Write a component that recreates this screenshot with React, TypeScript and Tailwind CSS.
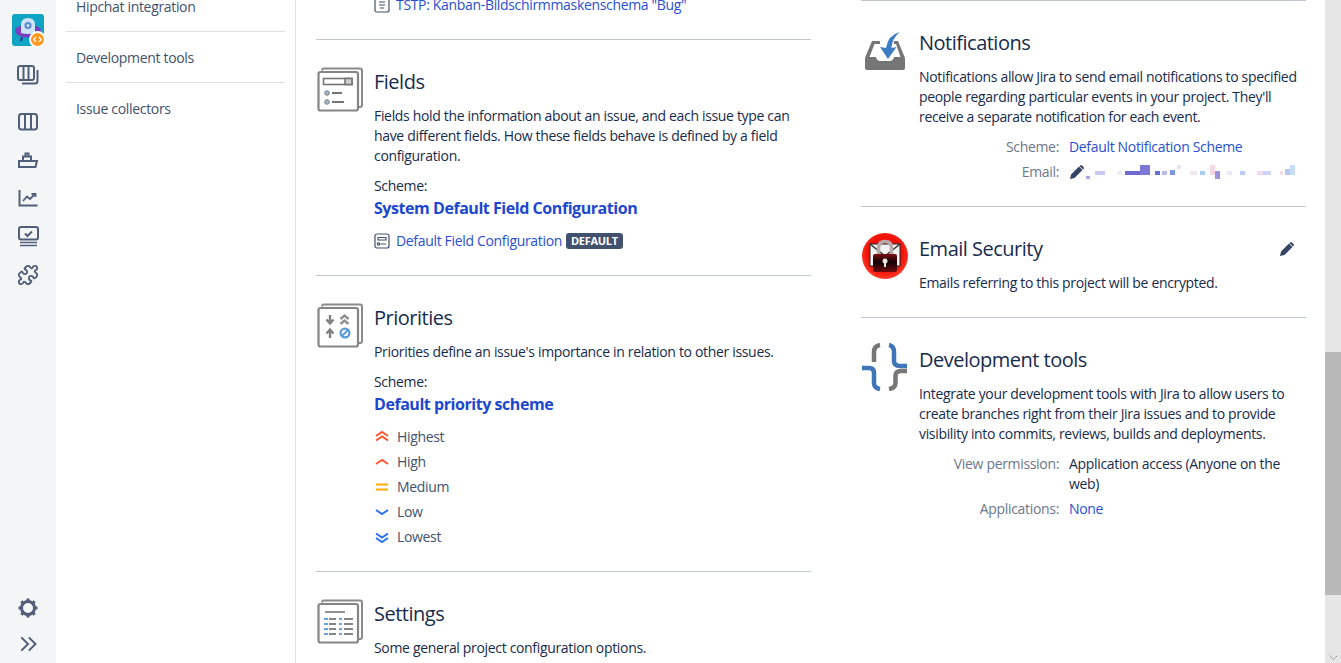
import React from 'react';
import { Puzzle } from 'lucide-react';

const font = { fontFamily: '"Open Sans", "Noto Sans", sans-serif' };

function Stack({ children }: { children: React.ReactNode }) {
  return (
    <svg width="46" height="46" viewBox="0 0 46 46" fill="none">
      <path d="M5 3.5 Q5 1.5 7 1.5 H43 Q45 1.5 45 3.5 V38 Q45 40 43 40 H41" stroke="#8a8a8a" strokeWidth="2" />
      <rect x="1.5" y="5" width="39.5" height="38.5" rx="2" fill="#fff" stroke="#858585" strokeWidth="2.2" />
      {children}
    </svg>
  );
}

function FieldsIcon() {
  return (
    <Stack>
      <rect x="6.5" y="11.5" width="28.5" height="6" fill="#fff" stroke="#757575" strokeWidth="1.6" />
      <rect x="28" y="11.5" width="7" height="6" fill="#cfcfcf" stroke="#757575" strokeWidth="1.6" />
      <circle cx="10" cy="26" r="2.3" fill="#9db8d3" stroke="#808080" />
      <circle cx="10" cy="35" r="2.3" fill="#9db8d3" stroke="#808080" />
      <path d="M15 26 H25 M15 35 H27" stroke="#757575" strokeWidth="2" />
    </Stack>
  );
}

function PrioritiesIcon() {
  return (
    <Stack>
      <path d="M13 12 V20 M9.5 16.5 L13 20.5 L16.5 16.5" stroke="#808080" strokeWidth="2.4" />
      <path d="M23.5 16 L27.5 12.5 L31.5 16 M23.5 21 L27.5 17.5 L31.5 21" stroke="#8f8f8f" strokeWidth="2.4" />
      <path d="M13 35 V27 M9.5 30.5 L13 26.5 L16.5 30.5" stroke="#808080" strokeWidth="2.4" />
      <circle cx="28" cy="30" r="4.4" stroke="#5b9bd5" strokeWidth="2.2" />
      <path d="M25 33 L31 27" stroke="#5b9bd5" strokeWidth="2" />
    </Stack>
  );
}

function SettingsIcon() {
  return (
    <Stack>
      <path d="M8 13 H28" stroke="#858585" strokeWidth="1.8" />
      <path d="M7 20 H11 M7 25 H11 M7 30 H11 M7 35 H11 M22 20 H25 M22 25 H25 M22 30 H25 M22 35 H25" stroke="#6ba3dc" strokeWidth="1.8" />
      <path d="M12 20 H19 M12 25 H19 M12 30 H19 M12 35 H19 M27 20 H36 M27 25 H36 M27 30 H36 M27 35 H36" stroke="#858585" strokeWidth="1.8" />
    </Stack>
  );
}

function NotificationsIcon() {
  return (
    <svg width="46" height="46" viewBox="0 0 46 46">
      <path d="M10 13 H18 V16 H12.5 L7.5 29 H14 Q15 33 18 33 H28 Q31 33 32 29 H38.5 L34 16 H32 V13 H36 L43 30 V40 Q43 42 41 42 H5 Q3 42 3 40 V30 Z" fill="#757575" />
      <path d="M38 4 Q26 7 24 20 L18 19 L26 31 L34.5 19 L29.5 20 Q30 10 38 4 Z" fill="#3d7dc4" />
    </svg>
  );
}

function EmailSecurityIcon() {
  return (
    <svg width="46" height="46" viewBox="0 0 46 46" className="-mt-px">
      <defs>
        <radialGradient id="redball" cx="50%" cy="45%" r="55%">
          <stop offset="0%" stopColor="#e80c04" />
          <stop offset="70%" stopColor="#f01208" />
          <stop offset="100%" stopColor="#ff3a28" />
        </radialGradient>
        <linearGradient id="lockbody" x1="0" y1="0" x2="0" y2="1">
          <stop offset="0%" stopColor="#7a0d10" />
          <stop offset="45%" stopColor="#120104" />
          <stop offset="100%" stopColor="#6e0c0e" />
        </linearGradient>
      </defs>
      <circle cx="23" cy="23" r="23" fill="url(#redball)" />
      <rect x="8" y="11" width="30" height="22" fill="#f2f2f2" stroke="#222" />
      <path d="M8 11 L23 23 L38 11" fill="none" stroke="#333" strokeWidth="1.5" />
      <path d="M16.5 23 V15 Q16.5 8.5 23 8.5 Q29.5 8.5 29.5 15 V23" fill="none" stroke="#b9a9a9" strokeWidth="3.5" />
      <rect x="11" y="21" width="24" height="18" rx="2" fill="url(#lockbody)" />
      <circle cx="23" cy="28" r="2.5" fill="#e6e6e6" />
      <rect x="22" y="28" width="2" height="6" fill="#e6e6e6" />
    </svg>
  );
}

function DevToolsIcon() {
  return (
    <svg width="46" height="48" viewBox="0 0 46 48" fill="none" strokeWidth="4.5" className="-mt-[2px]">
      <path d="M18 2 Q12 3 12 9 V19" stroke="#777777" />
      <path d="M0 25 H7 Q12 25 12 30 V40 Q12 45 18 46" stroke="#3f76b8" />
      <path d="M27 2 Q32 3 32 9 V18 Q32 23 38 23 H45" stroke="#3f76b8" />
      <path d="M45 28 H39 Q33.5 28 33.5 33 V40 Q33.5 45 27 46" stroke="#777777" />
    </svg>
  );
}

function Pencil() {
  return (
    <svg width="16" height="16" viewBox="0 0 16 16">
      <path d="M1 15 L2 10.5 L10 2.5 L13.5 6 L5.5 14 Z M11 1.5 Q12 .5 13 1.5 L14.5 3 Q15.5 4 14.5 5 L14 5.5 L10.5 2 Z" fill="#344563" />
    </svg>
  );
}

function BlurredEmail() {
  const blocks: [number, number, number, number, string][] = [
    [1, 12, 4, 3, '#a9a6e6'], [10, 7, 10, 4, '#c9c8ef'], [32, 7, 5, 4, '#eeeef9'],
    [40, 7, 15, 4, '#6f68cf'], [55, 1, 10, 10, '#7d78d6'], [70, 7, 5, 4, '#5f73cf'], [77, 7, 5, 4, '#b9bcec'],
    [85, 6, 5, 5, '#7f96e0'], [92, 1, 4, 4, '#e6e0f5'], [105, 7, 7, 4, '#f3e6f0'], [115, 7, 5, 4, '#a8cdf0'],
    [125, 1, 5, 10, '#f5d8e6'], [130, 7, 5, 8, '#9d90dc'], [142, 7, 5, 4, '#eeeaf8'], [155, 7, 5, 4, '#b9cdf0'],
    [172, 7, 6, 4, '#ecdcf0'], [178, 7, 8, 4, '#cfd2f2'], [195, 7, 3, 4, '#f3dcea'], [200, 5, 5, 6, '#b8c5ef'],
    [205, 1, 5, 10, '#c5dcf6'],
  ];
  return (
    <svg width="212" height="16" viewBox="0 0 212 16">
      <g style={{ filter: 'blur(0.5px)' }}>
        {blocks.map(([x, y, w, h, c], i) => (
          <rect key={i} x={x} y={y} width={w} height={h} fill={c} />
        ))}
      </g>
    </svg>
  );
}

function Priority({ kind }: { kind: string }) {
  const c = { Highest: '#ff5630', High: '#ff5630', Medium: '#ffab00', Low: '#2d6ff7', Lowest: '#2d6ff7' }[kind];
  const d = {
    Highest: 'M1 6 L7 2 L13 6 M1 10.5 L7 6.5 L13 10.5',
    High: 'M1 9 L7 5 L13 9',
    Medium: 'M1 4.5 H13 M1 9.5 H13',
    Low: 'M1 5 L7 9 L13 5',
    Lowest: 'M1 3.5 L7 7.5 L13 3.5 M1 8 L7 12 L13 8',
  }[kind];
  return (
    <svg width="14" height="14" viewBox="0 0 14 14" fill="none">
      <path d={d} stroke={c} strokeWidth="2" />
    </svg>
  );
}

function Section({ icon, title, action, children, last }: { icon: React.ReactNode; title: string; action?: React.ReactNode; children: React.ReactNode; last?: boolean }) {
  return (
    <div className={`flex pt-[30px] ${last ? '' : 'border-b border-[#c1c7d0]'}`}>
      <div className="w-[58px] shrink-0 -mt-[3px] pl-[1px]">{icon}</div>
      <div className="flex-1 min-w-0">
        <div className="flex items-center justify-between mb-3">
          <h3 className="text-[20px] leading-[24px] tracking-[-0.5px] text-[#172b4d]">{title}</h3>
          {action}
        </div>
        {children}
      </div>
    </div>
  );
}

function SchemeBlock({ name }: { name: string }) {
  return (
    <>
      <div className="mt-[10px] h-5 leading-5">Scheme:</div>
      <div className="mt-[2px] mb-[10px] text-[16px] leading-5 font-bold tracking-[-0.45px] text-[#1c48d0]">{name}</div>
    </>
  );
}

function InfoRow({ label, children }: { label: string; children: React.ReactNode }) {
  return (
    <div className="flex gap-[10px] pb-[5px] leading-5">
      <div className="w-[140px] shrink-0 text-right text-[#6b778c]">{label}:</div>
      <div className="flex-1 min-w-0">{children}</div>
    </div>
  );
}

function Rail() {
  const cls = 'h-[38px] flex items-center justify-center';
  const s = { width: 24, height: 24, viewBox: '0 0 24 24', fill: 'none', stroke: '#505f79', strokeWidth: 2 };
  return (
    <aside className="w-14 shrink-0 bg-[#f4f5f7] flex flex-col justify-between">
      <div>
        <div className="mt-[14px] ml-[12px] mb-[10px] w-8 h-8 relative">
          <svg width="32" height="32" viewBox="0 0 32 32" className="rounded-[3px]">
            <rect width="32" height="32" fill="#0fa3c4" />
            <ellipse cx="16" cy="17" rx="13" ry="6.5" fill="#7a3fc0" />
            <path d="M9 19 V11 Q9 4 16 4 Q23 4 23 11 V19 Q16 21 9 19 Z" fill="#cfe3f6" />
            <circle cx="16" cy="11.5" r="3.6" fill="#5d8fd0" />
            <circle cx="16" cy="11.5" r="1.3" fill="#e8f0fb" />
            <path d="M10 23 L9 27 M19 24 L19 27" stroke="#4a2a90" strokeWidth="2" />
          </svg>
          <span className="absolute -right-[2px] bottom-[-2px] w-[17px] h-[17px] rounded-full bg-[#ff991f] border-2 border-white flex items-center justify-center">
            <svg width="9" height="7" viewBox="0 0 9 7" fill="none" stroke="#fff" strokeWidth="1.3">
              <path d="M3 .8 L.8 3.5 L3 6.2 M6 .8 L8.2 3.5 L6 6.2" />
            </svg>
          </span>
        </div>
        <div className={cls}>
          <svg {...s}>
            <rect x="2" y="3" width="16" height="14" rx="2" />
            <path d="M7.5 3 V17 M12.5 3 V17" />
            <path d="M21.5 7 V18 Q21.5 20.5 19 20.5 H6" />
          </svg>
        </div>
        <div className={`${cls} mt-[9px]`}>
          <svg {...s}>
            <rect x="3" y="4" width="18" height="15.5" rx="2.5" />
            <path d="M9 4 V19.5 M15 4 V19.5" />
          </svg>
        </div>
        <div className={cls}>
          <svg {...s}>
            <path d="M3 13 H21 L19.5 19 H3 Z" />
            <path d="M7 13 V8.5 H15 V13" />
            <path d="M9.5 8.5 V5.5 H12.5 V8.5" />
          </svg>
        </div>
        <div className={cls}>
          <svg {...s}>
            <path d="M3.5 4 V19.5 H21.5" />
            <path d="M7 15 L11 10.5 L14 13 L19 8 M15.5 8 H19.5 V11" strokeWidth="1.8" />
          </svg>
        </div>
        <div className={cls}>
          <svg {...s}>
            <rect x="3" y="3" width="19" height="12.5" rx="2" />
            <path d="M9 9.5 L11.5 12 L16 7.5" />
            <path d="M4 18.5 H21 M4 21.5 H21" strokeWidth="1.7" />
          </svg>
        </div>
        <div className={`${cls} pt-[2px]`}>
          <Puzzle size={22} stroke="#505f79" strokeWidth={2} />
        </div>
      </div>
      <div className="pb-px">
        <div className="h-9 flex items-center justify-center">
          <svg {...s} strokeWidth="3">
            <circle cx="12" cy="12" r="6.5" />
            <path d="M12 2.5 V5.5 M12 18.5 V21.5 M2.5 12 H5.5 M18.5 12 H21.5 M5.3 5.3 L7.4 7.4 M16.6 16.6 L18.7 18.7 M5.3 18.7 L7.4 16.6 M16.6 7.4 L18.7 5.3" />
          </svg>
        </div>
        <div className="h-9 flex items-center justify-center">
          <svg {...s} width="20" height="20" strokeWidth="2.4">
            <path d="M4 4 L12 12 L4 20 M13 4 L21 12 L13 20" />
          </svg>
        </div>
      </div>
    </aside>
  );
}

export default function App() {
  return (
    <div className="h-[663px] w-[1341px] overflow-hidden flex bg-white text-[14px] leading-5 tracking-[-0.33px] text-[#172b4d]" style={font}>
      <Rail />
      <nav className="w-[240px] shrink-0 border-r border-[#dfe1e6] px-[10px] text-[#42526e]">
        <div className="-mt-[18px] h-[50px] px-[10px] flex items-center border-b border-[#dfe1e6]">Hipchat integration</div>
        <div className="h-[51px] px-[10px] pt-px flex items-center border-b border-[#dfe1e6]">Development tools</div>
        <div className="h-[51px] px-[10px] flex items-center">Issue collectors</div>
      </nav>

      <main className="flex-1 min-w-0 flex pl-[20px] pr-[19px]">
        <div className="w-[495px] shrink-0">
          <div className="-mt-[8px] pb-[22px] border-b border-[#c1c7d0] pl-[58px] h-[48px] flex items-start">
            <span className="h-[25px] flex items-center gap-[6px] text-[#2a50cf]">
              <svg width="16" height="16" viewBox="0 0 16 16" fill="none" stroke="#42526e" strokeWidth="1.2">
                <rect x="1" y="1" width="14" height="14" rx="2" />
                <path d="M5 5 H11 M5 8 H11 M6 11 H10" />
              </svg>
              TSTP: Kanban-Bildschirmmaskenschema "Bug"
            </span>
          </div>

          <Section icon={<FieldsIcon />} title="Fields">
            <p>Fields hold the information about an issue, and each issue type can have different fields. How these fields behave is defined by a field configuration.</p>
            <SchemeBlock name="System Default Field Configuration" />
            <div className="h-[25px] flex items-center mb-[22px] text-[#2a50cf]">
              <svg width="16" height="16" viewBox="0 0 16 16" fill="none" stroke="#42526e" strokeWidth="1.2" className="mr-[6px]">
                <rect x="1" y="1" width="14" height="14" rx="2" />
                <path d="M4 4.5 H12 V7 H4 Z M6.5 11 H12" />
                <circle cx="4.5" cy="11" r="1.2" />
              </svg>
              Default Field Configuration
              <span className="ml-1 h-[16px] px-[5px] rounded-[3px] bg-[#42526e] text-white text-[11px] leading-4 font-bold tracking-[-0.3px]">DEFAULT</span>
            </div>
          </Section>

          <Section icon={<PrioritiesIcon />} title="Priorities">
            <p>Priorities define an issue's importance in relation to other issues.</p>
            <SchemeBlock name="Default priority scheme" />
            <ul className="mb-[22px] text-[#42526e]">
              {['Highest', 'High', 'Medium', 'Low', 'Lowest'].map((p) => (
                <li key={p} className="h-[25px] flex items-center gap-2 pl-px">
                  <Priority kind={p} />
                  {p}
                </li>
              ))}
            </ul>
          </Section>

          <Section icon={<SettingsIcon />} title="Settings" last>
            <p>Some general project configuration options.</p>
          </Section>
        </div>

        <div className="w-[445px] shrink-0 ml-[50px] border-t border-[#c1c7d0]">
          <Section icon={<NotificationsIcon />} title="Notifications">
            <p className="mb-[10px]">Notifications allow Jira to send email notifications to specified people regarding particular events in your project. They'll receive a separate notification for each event.</p>
            <InfoRow label="Scheme">
              <span className="text-[#2a50cf]">Default Notification Scheme</span>
            </InfoRow>
            <InfoRow label="Email">
              <div className="flex items-center h-5 mb-[19px]">
                <Pencil />
                <BlurredEmail />
              </div>
            </InfoRow>
          </Section>

          <Section
            icon={<EmailSecurityIcon />}
            title="Email Security"
            action={
              <span className="mr-[11px]">
                <Pencil />
              </span>
            }
          >
            <p className="mb-[24px]">Emails referring to this project will be encrypted.</p>
          </Section>

          <Section icon={<DevToolsIcon />} title="Development tools" last>
            <p className="mb-[10px]">Integrate your development tools with Jira to allow users to create branches right from their Jira issues and to provide visibility into commits, reviews, builds and deployments.</p>
            <InfoRow label="View permission">Application access (Anyone on the web)</InfoRow>
            <InfoRow label="Applications">
              <span className="text-[#2a50cf]">None</span>
            </InfoRow>
          </Section>
        </div>
      </main>

      <div className="w-4 shrink-0 bg-[#e6e6e6] flex flex-col">
        <div className="h-[352px]" />
        <div className="h-[243px] bg-[#b8b8b8]" />
        <div className="flex-1 flex items-end justify-center pb-[2px]">
          <svg width="9" height="6" viewBox="0 0 9 6" fill="none" stroke="#a0a0a0">
            <path d="M.5 .5 L4.5 4.5 L8.5 .5" />
          </svg>
        </div>
      </div>
    </div>
  );
}
